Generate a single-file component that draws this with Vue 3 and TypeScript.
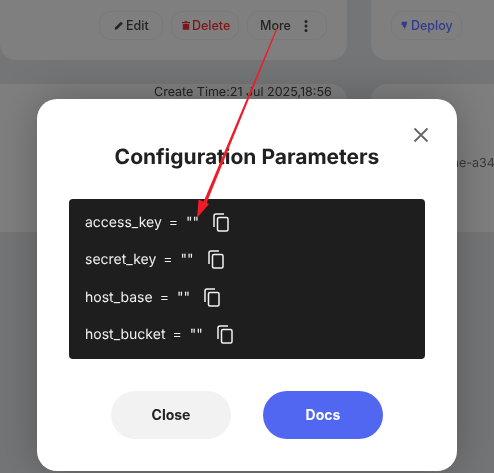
<script setup lang="ts">
interface Param {
  name: string
}
const params: Param[] = [
  { name: 'access_key' },
  { name: 'secret_key' },
  { name: 'host_base' },
  { name: 'host_bucket' },
]
</script>

<template>
  <div class="page">
    <div class="grid">
      <section class="card top-card actions">
        <button class="pill edit">
          <svg class="ico" viewBox="0 0 12 12"><path d="M.8 11.200l.7-3L8.300 1.400l2.300 2.300-6.800 6.800z" fill="currentColor" /></svg>
          <span class="txt">Edit</span>
        </button>
        <button class="pill danger">
          <svg class="ico" viewBox="0 0 10 12"><path d="M3.300 .6h3.400l.5 1H10v1.500H0V1.600h2.800zM1 4h8v7.400H1z" fill="currentColor" /></svg>
          <span class="txt">Delete</span>
        </button>
        <button class="pill more">
          <span class="txt">More</span>
          <svg class="dots" viewBox="0 0 4 12"><circle cx="2" cy="1.500" r="1.500" /><circle cx="2" cy="6" r="1.500" /><circle cx="2" cy="10.500" r="1.500" /></svg>
        </button>
      </section>
      <section class="card top-card actions">
        <button class="pill deploy">
          <svg class="ico" viewBox="0 0 10 12"><path d="M1 .5h8L7.800 3.500H9L6.500 6.500H8L3.800 11.800 4.600 8H3V5.500H1z" fill="currentColor" /></svg>
          <span class="txt">Deploy</span>
        </button>
      </section>
      <section class="card low-card">
        <p class="time txt">Create Time:21 Jul 2025,18:56</p>
      </section>
      <section class="card low-card right">
        <p class="name txt">me-a34</p>
      </section>
    </div>

    <div class="overlay">
      <div class="modal">
        <button class="close-x" aria-label="Close">
          <svg viewBox="0 0 16 16"><path d="M1.500 1.500l13 13M14.500 1.500l-13 13" /></svg>
        </button>
        <h2 class="title txt">Configuration Parameters</h2>
        <div class="code">
          <div v-for="p in params" :key="p.name" class="row txt">
            <span class="key">{{ p.name }}</span>
            <span class="eq">=</span>
            <span class="val">""</span>
            <svg class="copy" viewBox="0 0 16 19">
              <path d="M11 1H3a2 2 0 0 0-2 2v11" />
              <rect x="4.500" y="4.500" width="10.500" height="13.500" rx="1.500" />
            </svg>
          </div>
        </div>
        <div class="footer">
          <button class="btn ghost"><span class="txt">Close</span></button>
          <button class="btn primary"><span class="txt">Docs</span></button>
        </div>
      </div>
    </div>

    <svg class="arrow" viewBox="0 0 494 473">
      <path d="M276.500 28L277.500 28.400 205.800 205 202.700 203.800z" fill="#ee1c28" />
      <path d="M197 218L198.500 199.500 209 204z" fill="#ee1c28" />
    </svg>
  </div>
</template>

<style>
html,
body {
  margin: 0;
  background: #747577;
}
</style>

<style scoped>
.page {
  position: relative;
  width: 494px;
  height: 473px;
  overflow: hidden;
  background: #747577;
  font-family: Inter, "Liberation Sans", sans-serif;
  text-rendering: geometricPrecision;
}
.txt {
  display: block;
  will-change: transform;
}
.grid {
  display: grid;
  grid-template-columns: 347px 147px;
  grid-template-rows: 60px 148px;
  column-gap: 24px;
  row-gap: 24px;
  width: 518px;
}
.card {
  background: #7f7f7f;
  box-sizing: border-box;
}
.top-card {
  border-radius: 0 0 16px 16px;
}
.actions {
  display: flex;
  justify-content: flex-end;
  align-items: flex-start;
  gap: 8px;
  padding: 11px 20px 0 0;
}
.top-card:nth-child(2) {
  border-radius: 0 0 0 16px;
  justify-content: flex-start;
  padding-left: 20px;
}
.pill {
  height: 29px;
  box-sizing: border-box;
  padding: 0;
  display: flex;
  align-items: center;
  justify-content: center;
  gap: 2px;
  border: 1px solid #797979;
  border-radius: 12px;
  background: transparent;
  color: #232323;
  font: 500 12.500px Inter, "Liberation Sans", sans-serif;
}
.edit {
  width: 64px;
}
.danger {
  width: 68px;
  padding-left: 2px;
  color: #7e1518;
}
.more {
  width: 80px;
  padding: 0 18px 0 12px;
  justify-content: space-between;
}
.deploy {
  width: 71px;
  gap: 3px;
  padding-left: 1px;
  color: #2f3b8f;
}
.ico {
  width: 10px;
  height: 11px;
}
.danger .ico {
  width: 8px;
}
.deploy .ico {
  width: 7px;
}
.dots {
  width: 4px;
  height: 12px;
  fill: #232323;
}
.low-card {
  border-radius: 0 16px 16px 0;
  padding-left: 154px;
}
.low-card.right {
  border-radius: 16px 0 0 16px;
  padding-left: 77px;
}
.time {
  margin: 1px 0 0;
  font-size: 12.500px;
  line-height: 16px;
  white-space: nowrap;
  color: #232323;
}
.name {
  margin: 72px 0 0;
  font-size: 12.500px;
  line-height: 16px;
  color: #3a3a3a;
}
.overlay {
  position: absolute;
  inset: 0;
}
.modal {
  position: absolute;
  left: 37px;
  top: 99px;
  width: 420px;
  height: 372px;
  box-sizing: border-box;
  padding: 45px 32px 0;
  background: #fff;
  border-radius: 20px;
  box-shadow: 0 0 40px rgba(0, 0, 0, 0.25);
}
.close-x {
  position: absolute;
  top: 28px;
  right: 28px;
  width: 16px;
  height: 16px;
  padding: 0;
  border: 0;
  background: none;
}
.close-x svg {
  display: block;
  width: 16px;
  height: 16px;
  fill: none;
  stroke: #666;
  stroke-width: 1.800;
}
.title {
  margin: 0;
  height: 25px;
  line-height: 25px;
  padding-top: 1px;
  text-align: center;
  font-size: 21px;
  font-weight: 700;
  color: #212121;
}
.code {
  margin-top: 29px;
  height: 160px;
  box-sizing: border-box;
  padding: 4.500px 16px 0;
  background: #1e1e1e;
  border-radius: 4px;
}
.row {
  height: 37.500px;
  display: flex;
  align-items: center;
  font-size: 14px;
  color: #f0f0f0;
}
.eq {
  margin: 0 8px 0 7px;
}
.copy {
  margin-left: 14px;
  width: 16px;
  height: 19px;
  fill: none;
  stroke: #f2f2f2;
  stroke-width: 1.500;
}
.footer {
  margin-top: 32px;
  display: flex;
  justify-content: center;
  gap: 32px;
}
.btn {
  width: 120px;
  height: 48px;
  padding: 0 0 2px;
  border: 0;
  border-radius: 24px;
  font: 700 14px Inter, "Liberation Sans", sans-serif;
}
.ghost {
  background: #f2f2f2;
  color: #212121;
}
.primary {
  background: #5267f1;
  color: #fff;
}
.arrow {
  position: absolute;
  inset: 0;
  width: 494px;
  height: 473px;
  pointer-events: none;
}
</style>
